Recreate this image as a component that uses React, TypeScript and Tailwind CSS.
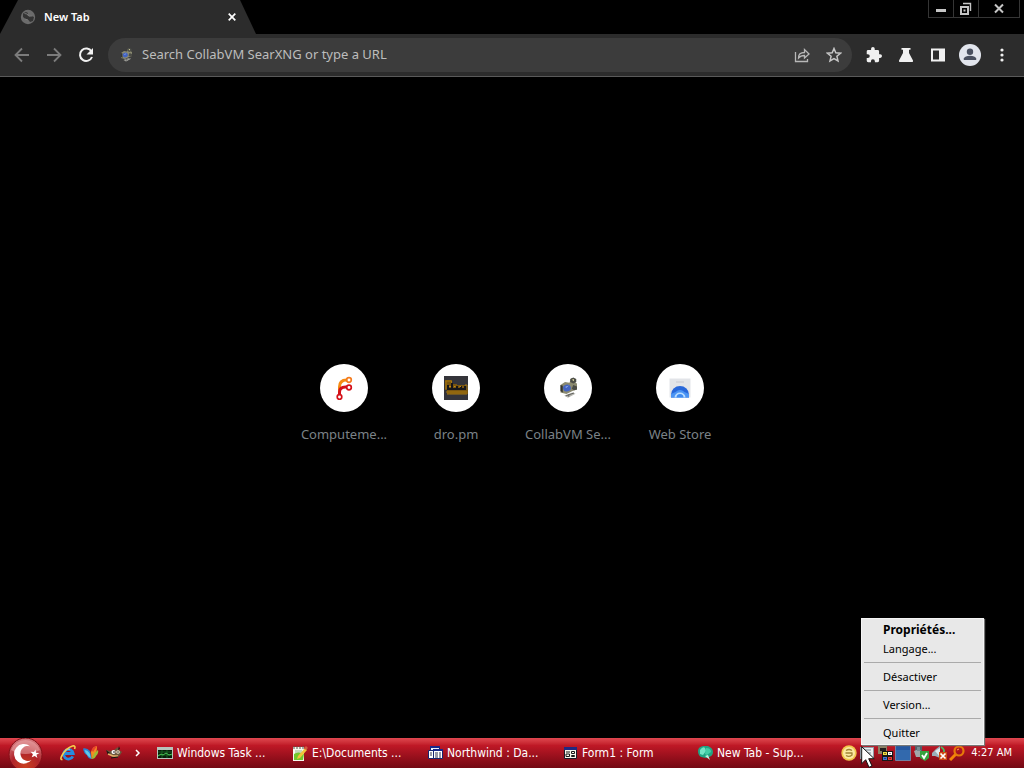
import type { ReactNode } from "react";

function GlobeIcon() {
  return (
    <svg className="size-4 shrink-0" viewBox="0 0 16 16" aria-hidden="true">
      <circle cx="8" cy="8" r="7.2" fill="#6b6b6b" />
      <path d="M3 4.5 6 3l2 1-1 2 2 1.500 2.500-.5L14 8l-1 4-3 1-1.500-2-3-1L3 8z" fill="#343434" />
      <path d="M4.500 4.500 7 5l2 2h3M5 10l3 1" stroke="#777" strokeWidth="1" fill="none" />
    </svg>
  );
}

function SearchEngineIcon({ className }: { className: string }) {
  return (
    <svg className={className} viewBox="0 0 16 16" aria-hidden="true">
      <path d="m3 6 3-2 3 .5 1-3 3 1v2l1 .5v4l-3 1-4 2-4-1z" fill="#8b8a70" />
      <path d="m9.500 2 2-1 2 1v2l-2 1-2-1zm2 4 2.500 1v2l-2 .5-1.500-1z" fill="#4b4c46" />
      <path d="m10.500 2.500 1.500-.5v1.500z" fill="#d9d59e" />
      <path d="m3 6 1.500.5v4.500L3 10z" fill="#34352e" />
      <ellipse cx="7.300" cy="8" rx="2.600" ry="2.300" fill="#4464c0" transform="rotate(-15 7.300 8)" />
      <path d="m6 7.300 2.500-1-1.500 1.500z" fill="#9db6f0" />
      <path d="m5.500 13 5.500-2 2 .8-5 2.700z" fill="#b4b4ae" />
      <path d="m6.500 13.300 5.500-2M8.500 12.300v1.500" stroke="#5b5b57" strokeWidth=".6" />
    </svg>
  );
}

function ForgeIcon() {
  return (
    <svg className="size-6" viewBox="0 0 24 24" fill="none" aria-hidden="true">
      <path d="M7.500 18V11q0-7 7-7h1" stroke="#f58a12" strokeWidth="3" />
      <path d="M7.500 19v-3q0-5 6-5h2" stroke="#d41019" strokeWidth="3" />
      <circle cx="17" cy="4" r="2.300" fill="#fff" stroke="#f47a1c" strokeWidth="1.700" />
      <circle cx="17" cy="11.500" r="2.300" fill="#fff" stroke="#d41019" strokeWidth="1.700" />
      <circle cx="7.500" cy="21" r="2.300" fill="#fff" stroke="#d41019" strokeWidth="1.700" />
    </svg>
  );
}

function DroIcon() {
  return (
    <svg className="size-6" viewBox="0 0 24 24" fill="none" aria-hidden="true">
      <path d="M0 0h24v24H0z" fill="#34343a" />
      <path d="M1 4h7v4h5v1h9v4h2v5H3v-4H1z" fill="#7a5610" />
      <path d="M1.500 5h6v3M2 5v8m0 3h21M3 18h20M21 9h2v4" stroke="#a8780f" />
      <path d="M4 9v4h4V7m1 6h4v-3m0 3h4v-3m0 3h4v-3" stroke="#16161a" strokeWidth="2" />
      <path d="M5 10.500h2m3 0h1.500m4 0H17" stroke="#c28a14" />
    </svg>
  );
}

function StoreIcon() {
  return (
    <svg className="size-6" viewBox="0 0 24 24" fill="none" aria-hidden="true">
      <path d="M1.500 2.500h21v19h-21z" fill="#e2e4e8" />
      <path d="M8 6h8" stroke="#d0d2d8" strokeWidth="1.500" />
      <path d="M3 21.500v-3a9 8.500 0 0 1 18 0v3z" fill="#2867d9" />
      <path d="M3 21.500V18l4.500-2q4.500-4 9 0l4.500 2v3.500z" fill="#4a94f4" />
      <path d="M6.500 21.500a5.500 5 0 0 1 11 0z" fill="#b9dcff" />
      <path d="M8.500 21.500a3.500 3.500 0 0 1 7 0z" fill="#3d8af0" />
    </svg>
  );
}

function BrowserTab() {
  return (
    <div className="flex h-full w-64 items-center bg-[#2c2c2c] pr-5 pl-5 [clip-path:polygon(18px_0,240px_0,100%_100%,0_100%)]">
      <GlobeIcon />
      <span className="ml-2 flex-1 font-['Noto_Sans','Open_Sans',sans-serif] text-[11px] font-semibold text-white">New Tab</span>
      <button type="button" aria-label="Close tab" className="grid size-2 place-items-center text-white">
        <svg className="size-2" viewBox="0 0 8 8"><path d="m.7.7 6.600 6.600m0-6.600L.7 7.300" stroke="currentColor" strokeWidth="1.700" /></svg>
      </button>
    </div>
  );
}

function WindowControls() {
  return (
    <div className="mr-1 flex h-[18px] border border-t-0 border-[#353535] text-[#c5c5c5]">
      <button type="button" aria-label="Minimize" className="flex w-6 items-center justify-center">
        <svg className="size-4" viewBox="0 0 16 16"><path d="M3 9.500h10" stroke="currentColor" strokeWidth="3" /></svg>
      </button>
      <button type="button" aria-label="Restore" className="flex w-[26px] items-center justify-center border-x border-[#353535]">
        <svg className="size-4" viewBox="0 0 16 16" fill="none" stroke="currentColor">
          <path d="M5 2.500h7.500V10" strokeWidth="1.400" /><path d="M3 6h7v7H3z" strokeWidth="2" /><path d="M5.500 9.500h2" strokeWidth="2" />
        </svg>
      </button>
      <button type="button" aria-label="Close" className="flex w-10 items-center justify-center">
        <svg className="size-4" viewBox="0 0 16 16"><path d="m4 3.500 8 8m0-8-8 8" stroke="currentColor" strokeWidth="2" /></svg>
      </button>
    </div>
  );
}

function ToolButton({ label, children }: { label: string; children: ReactNode }) {
  return (
    <button type="button" aria-label={label} className="grid size-8 shrink-0 place-items-center text-[#f1f1f1]">
      {children}
    </button>
  );
}

function Toolbar() {
  return (
    <div className="flex h-[43px] shrink-0 items-center border-b border-[#5a5a5a] bg-[#2c2c2c] pr-1.5 pl-1.5">
      <ToolButton label="Back">
        <svg className="size-4 text-[#7c7c7c]" viewBox="0 0 16 16" fill="none" stroke="currentColor" strokeWidth="1.800"><path d="M15 8H2m6-6.500L1.500 8 8 14.500" /></svg>
      </ToolButton>
      <ToolButton label="Forward">
        <svg className="size-4 text-[#7c7c7c]" viewBox="0 0 16 16" fill="none" stroke="currentColor" strokeWidth="1.800"><path d="M1 8h13M8 1.500 14.500 8 8 14.500" /></svg>
      </ToolButton>
      <ToolButton label="Reload">
        <svg className="size-4" viewBox="0 0 16 16" fill="none"><path d="M13.500 4.500A6.200 6.200 0 1 0 14 10" stroke="currentColor" strokeWidth="2" /><path d="M15 1v6.500H8.500z" fill="currentColor" /></svg>
      </ToolButton>
      <div className="ml-1.5 flex h-[34px] flex-1 items-center rounded-full bg-[#3c3c3c] pr-0.5 pl-2.5">
        <SearchEngineIcon className="size-4 shrink-0" />
        <input
          type="text"
          aria-label="Address and search bar"
          placeholder="Search CollabVM SearXNG or type a URL"
          className="ml-2 min-w-0 flex-1 bg-transparent font-['Noto_Sans','Open_Sans',sans-serif] text-[13px] text-[#bdbdbd] outline-none placeholder:text-[#bdbdbd]"
        />
        <ToolButton label="Share this page">
          <svg className="size-4 text-[#b8b8b8]" viewBox="0 0 16 16" fill="none" stroke="currentColor" strokeWidth="1.300"><path d="M1.500 5v9.500h12V12M4.500 11q0-5.500 6-5.500V2.500L15 7l-4.500 4V8.500Q6.500 8.500 4.500 11z" /></svg>
        </ToolButton>
        <ToolButton label="Bookmark this tab">
          <svg className="size-4 text-[#c6c6c6]" viewBox="0 0 16 16" fill="none" stroke="currentColor" strokeWidth="1.500"><path d="m8 1.500 1.800 4.300 4.700.4-3.600 3.100 1.100 4.600L8 11.500l-4 2.400 1.100-4.600-3.600-3.100 4.700-.4z" /></svg>
        </ToolButton>
      </div>
      <div className="ml-1.5 flex">
        <ToolButton label="Extensions">
          <svg className="size-4" viewBox="1 1 22 22" fill="currentColor"><path d="M20.500 11H19V7a2 2 0 0 0-2-2h-4V3.500a2.500 2.500 0 0 0-5 0V5H4a2 2 0 0 0-2 2v3.800h1.500a2.700 2.700 0 0 1 0 5.400H2V20a2 2 0 0 0 2 2h3.800v-1.500a2.700 2.700 0 0 1 5.400 0V22H17a2 2 0 0 0 2-2v-4h1.500a2.500 2.500 0 0 0 0-5z" /></svg>
        </ToolButton>
        <ToolButton label="Experiments">
          <svg className="size-4" viewBox="0 0 16 16" fill="currentColor"><path d="M3.500 1h9v1.800H11V6l4 7.500q.5 1.500-1 1.500H2q-1.500 0-1-1.500L5 6V2.800H3.500z" /></svg>
        </ToolButton>
        <ToolButton label="Side panel">
          <svg className="size-4" viewBox="0 0 16 16"><path fillRule="evenodd" d="M1 1.500h14v13H1zm2 2v9h6v-9z" fill="currentColor" /></svg>
        </ToolButton>
        <ToolButton label="Profile">
          <svg className="size-[22px]" viewBox="0 0 22 22"><circle cx="11" cy="11" r="11" fill="#e2e5ed" /><circle cx="11" cy="7.800" r="3.200" fill="#4a5060" /><path d="M4.800 16v-1.500Q6 11.800 11 11.800t6.200 2.700V16z" fill="#4a5060" /></svg>
        </ToolButton>
        <ToolButton label="Menu">
          <svg className="size-4" viewBox="0 0 16 16" fill="currentColor"><circle cx="8" cy="3" r="1.600" /><circle cx="8" cy="8" r="1.600" /><circle cx="8" cy="13" r="1.600" /></svg>
        </ToolButton>
      </div>
    </div>
  );
}

function Shortcut({ label, children }: { label: string; children: ReactNode }) {
  return (
    <a href="#" className="flex w-28 flex-col items-center gap-3.5">
      <span className="grid size-12 place-items-center rounded-full bg-white">{children}</span>
      <span className="font-['Noto_Sans','Open_Sans',sans-serif] text-[13px] leading-4 whitespace-nowrap text-[#7b8287]">{label}</span>
    </a>
  );
}

function StartButton() {
  return (
    <button type="button" aria-label="Start" className="mr-4 ml-2 h-[30px] w-9 shrink-0">
      <svg className="h-[30px] w-9" viewBox="0 0 36 30">
        <defs>
          <radialGradient id="orb" cx=".5" cy=".85" r=".85"><stop offset="0" stopColor="#c9401f" /><stop offset=".5" stopColor="#b0232a" /><stop offset="1" stopColor="#d98286" /></radialGradient>
        </defs>
        <circle cx="17.500" cy="16.500" r="16.500" fill="url(#orb)" stroke="#851018" />
        <path d="M3 12a15.500 15.500 0 0 1 29 0q-14.500 8-29 0z" fill="#f0b5b5" opacity=".5" />
        <path d="M22 8.200A9.800 9.800 0 1 0 23.500 22 7.500 7.500 0 1 1 22 8.200z" fill="#fff" />
        <path d="m27.500 11.500.5 3.200 3.400.3-2.900 1.800.9 3.300-2.600-2.200-3.100 1.400 1.200-3.100-2.300-2.500 3.400.2z" fill="#fff" />
      </svg>
    </button>
  );
}

function QuickLaunch() {
  return (
    <div className="flex items-center gap-[7px]">
      <a href="#" aria-label="Internet Explorer">
        <svg className="size-4" viewBox="0 0 16 16" fill="none">
          <path d="M12.800 11.300A4.800 4.800 0 1 1 13.200 8.500H5" stroke="#258ce0" strokeWidth="2.800" />
          <path d="M5 5.500Q7 3.500 10 4.200" stroke="#a5dcff" />
          <path d="M2.500 14.500Q-.5 15 2 10.500 6 3 12.500 1q3.500-.7 2 3" stroke="#f5cd4b" strokeWidth="1.600" />
        </svg>
      </a>
      <a href="#" aria-label="MSN">
        <svg className="size-4" viewBox="0 0 16 16">
          <path d="M0 3.500q4-1 7 2.500l2 8Q5 14 4 10 1 9 0 3.500z" fill="#2881d4" />
          <path d="M1.500 5q3 0 5 3l1.500 5Q3.500 11 1.500 5z" fill="#61c8e8" />
          <path d="M8.500 14 8 7q2-6 6-6 0 4-1 7z" fill="#f28b22" />
          <path d="m8.500 14 3-6L15 5q1 3-2 6-1 3-4.500 3z" fill="#9cbb35" />
          <path d="M8.500 5q2-4 5.500-4l-4 6z" fill="#e9452b" />
        </svg>
      </a>
      <a href="#" aria-label="Image editor">
        <svg className="size-4" viewBox="0 0 16 16">
          <path d="m0 5 4 1 4-1 4-3 1 3 3 2-2 3-3 3-5-1-3-3z" fill="#6b563d" />
          <path d="m0 5 4 3-2 2zM13 1l-1 4 2-1z" fill="#1e1914" />
          <circle cx="7.500" cy="7" r="2" fill="#fff" /><circle cx="12" cy="7" r="1.800" fill="#f7ead1" />
          <circle cx="8" cy="7" r=".8" /><circle cx="12" cy="7" r=".7" />
          <path d="m2 9 5 2 5 0" stroke="#e7b168" strokeWidth="1.500" fill="none" /><path d="m5 13 7-1" stroke="#17120d" />
        </svg>
      </a>
      <button type="button" aria-label="More quick launch items" className="grid size-4 place-items-center text-white">
        <svg className="size-2" viewBox="0 0 8 8" fill="none"><path d="m3 1 3 3-3 3" stroke="currentColor" strokeWidth="1.500" /></svg>
      </button>
    </div>
  );
}

function TaskButton({ label, children }: { label: string; children: ReactNode }) {
  return (
    <button type="button" className="flex w-[135px] items-center gap-1 text-left font-['DejaVu_Sans_Condensed','Noto_Sans',sans-serif] text-xs whitespace-nowrap text-white">
      <svg className="size-4 shrink-0" viewBox="0 0 16 16" aria-hidden="true">{children}</svg>
      <span>{label}</span>
    </button>
  );
}

function Tray() {
  return (
    <div className="ml-auto flex shrink-0 items-center gap-0.5 pr-3">
      <svg className="size-4" viewBox="0 0 16 16">
        <circle cx="8" cy="8" r="7.700" fill="#f1c64b" /><circle cx="8" cy="8" r="6" fill="#fbe8a1" />
        <path d="M5 5.500q3-2 6 0M4.500 8h7M5 10.500q3 2 6-.5V8" stroke="#a08436" strokeWidth="1.300" fill="none" />
      </svg>
      <svg className="size-4" viewBox="0 0 16 16"><path d="M1 2h14v12H1z" fill="#909ba5" /><path d="M2 3h12v9H2z" fill="#e8edf0" /><path d="M4 5h8M4 8h8" stroke="#798590" /></svg>
      <svg className="size-4" viewBox="0 0 16 16">
        <path d="M1 1h9v8H1z" fill="#8c8166" /><path d="M3 3h6v3H3z" fill="#221e1e" /><path d="M5 6h11v10H5z" fill="#171717" />
        <path d="M6 7h4v3H6z" fill="#f4dc42" /><path d="M11 7h4v3h-4z" fill="#fff" /><path d="M6 12h4v3H6z" fill="#4273d9" /><path d="M11 12h4v3h-4z" fill="#e83b34" />
        <path d="M8 8v1m5-1v1m-5 4v1m5-1v1" stroke="#171717" />
      </svg>
      <svg className="size-4" viewBox="0 0 16 16"><path d="M.5.500h15v15H.5z" fill="#3269ad" stroke="#7181a0" /><path d="M1 1h14v4H1z" fill="#2557a0" /></svg>
      <svg className="size-4" viewBox="0 0 16 16">
        <path d="M2 0h7v9H2z" fill="#53606a" /><path d="m1 6 5-2 4 4-2 4H3z" fill="#a2a7a9" /><path d="M4 2h3v4H4z" fill="#778b92" />
        <path d="M7 6h9v7l-4 3-5-3z" fill="#35a33e" /><path d="m9 10 2 3 3-5" stroke="#fff" strokeWidth="1.800" fill="none" />
      </svg>
      <svg className="size-4" viewBox="0 0 16 16">
        <path d="m1 8 4-4 4-3v12L4 11H1z" fill="#9baeb8" /><path d="m4 6 5-3v9z" fill="#e0e9ec" /><path d="M10 2q5 3 2 7" stroke="#48bb62" strokeWidth="1.800" fill="none" />
        <path d="M8 7h8v8H8z" fill="#cc4a13" /><path d="m9.500 8.500 5 5m0-5-5 5" stroke="#fff" strokeWidth="1.700" />
      </svg>
      <svg className="size-4" viewBox="0 0 16 16" fill="none"><path d="m1 15 6-6" stroke="#f58408" strokeWidth="3" /><circle cx="10" cy="6" r="4.500" stroke="#e77b09" strokeWidth="2.200" /><path d="m8 5 2-1" stroke="#ffb24f" /></svg>
      <time className="ml-1 font-['DejaVu_Sans_Condensed','Noto_Sans',sans-serif] text-[11px] whitespace-nowrap text-white">4:27 AM</time>
    </div>
  );
}

function Taskbar() {
  return (
    <div className="flex h-[30px] shrink-0 items-center bg-linear-to-b from-[#e04750] from-0% via-[#bf1826] via-25% to-[#730813]">
      <StartButton />
      <QuickLaunch />
      <div className="ml-3 flex min-w-0">
        <TaskButton label="Windows Task ...">
          <path d="M0 2h16v12H0z" fill="#b7c4bb" /><path d="M1 5h14v8H1z" fill="#081d0b" />
          <path d="M1 7h14M1 10h14M5 5v8M10 5v8" stroke="#176123" /><path d="m1 11 3-2 2 1 3-2 3 2 3-1" stroke="#48c654" fill="none" />
        </TaskButton>
        <TaskButton label="E:\Documents ...">
          <path d="M1 2h11v14H1z" fill="#f5f9ef" /><path d="M2 1v3m3-3v3m3-3v3m3-3v3" stroke="#565f52" />
          <path d="M3 6h7M3 8h8" stroke="#94b28a" /><path d="M2 9q4-3 10 0l-1 6H2z" fill="#72c62b" /><path d="m6 11 7-8 2 2-7 8-3 1z" fill="#f0c23b" /><path d="m12 3 2-2 2 2-2 2z" fill="#cf5a3f" />
        </TaskButton>
        <TaskButton label="Northwind : Da...">
          <path d="M3.500 1.500h9v9h-9z" fill="#edf3fc" stroke="#1b266f" /><path d="M3 1h10v2H3z" fill="#17278a" />
          <path d="M1.500 5.500h8v8h-8z" fill="#fff" stroke="#17246f" /><path d="M6.500 4.500h9v9h-9z" fill="#fff" stroke="#17246f" /><path d="M6 4h10v2H6z" fill="#17278a" /><path d="M8 8h3m1 0h2m-6 2h3m1 0h2m-6 2h3m1 0h2M3 8h2m-2 2h2" stroke="#303050" />
        </TaskButton>
        <TaskButton label="Form1 : Form">
          <path d="M2.500 3.500h12v10h-12z" fill="#f8f8ed" stroke="#1a1b27" /><path d="M2 2h13v3H2z" fill="#202982" />
          <path d="M4 7h4m1.500-.5h3v2h-3zM4 9h3.500v2.500H4zm5.500 1.500h3v1h-3z" fill="none" stroke="#171717" />
        </TaskButton>
        <TaskButton label="New Tab - Sup...">
          <path d="M1 6q0-4 5-5h5q5 2 5 6 0 4-4 5l-3 1-5-1q-3-2-3-6z" fill="#21a483" />
          <path d="M3 5q3-4 5-2l1 3-3 4-3-1z" fill="#73e4c5" /><path d="M9 3q5 0 5 4l-4 3-2-1z" fill="#43cda6" />
          <path d="m8 11 3-1 2 5z" fill="#c4f1df" />
        </TaskButton>
      </div>
      <Tray />
    </div>
  );
}

function MenuItem({ children, strong = false }: { children: ReactNode; strong?: boolean }) {
  return (
    <button type="button" role="menuitem" className={`block h-[19px] w-full pl-[19px] text-left leading-[19px] ${strong ? "text-xs font-bold" : "text-[11px]"}`}>
      {children}
    </button>
  );
}

function TrayMenu() {
  return (
    <div role="menu" className="absolute right-10 bottom-[23px] w-[123px] border border-[#f5f5f5] bg-[#e8e8e8] px-0.5 pt-px pb-0.5 font-['Noto_Sans','Open_Sans',sans-serif] text-black shadow-[1px_1px_1px_#777]">
      <MenuItem strong>Propriétés...</MenuItem>
      <MenuItem>Langage...</MenuItem>
      <hr className="my-1 border-[#aaaaaa]" />
      <MenuItem>Désactiver</MenuItem>
      <hr className="my-1 border-[#aaaaaa]" />
      <MenuItem>Version...</MenuItem>
      <hr className="my-1 border-[#aaaaaa]" />
      <MenuItem>Quitter</MenuItem>
    </div>
  );
}

export default function App() {
  return (
    <div className="relative flex min-h-screen flex-col overflow-hidden bg-black">
      <header>
        <div className="flex h-[34px] items-start justify-between">
          <BrowserTab />
          <WindowControls />
        </div>
        <Toolbar />
      </header>
      <main className="flex flex-1 items-center justify-center pb-2.5">
        <nav aria-label="Shortcuts" className="flex flex-wrap justify-center">
          <Shortcut label="Computeme..."><ForgeIcon /></Shortcut>
          <Shortcut label="dro.pm"><DroIcon /></Shortcut>
          <Shortcut label="CollabVM Se..."><SearchEngineIcon className="size-6" /></Shortcut>
          <Shortcut label="Web Store"><StoreIcon /></Shortcut>
        </nav>
      </main>
      <Taskbar />
      <TrayMenu />
      <svg className="pointer-events-none absolute right-[149px] bottom-0 h-[22px] w-3.5" viewBox="0 0 14 22" aria-hidden="true">
        <path d="M.7.7v17l4-4 3.300 7.600 3-1.300-3.300-7.300h5.500z" fill="#fff" stroke="#111" />
      </svg>
    </div>
  );
}
